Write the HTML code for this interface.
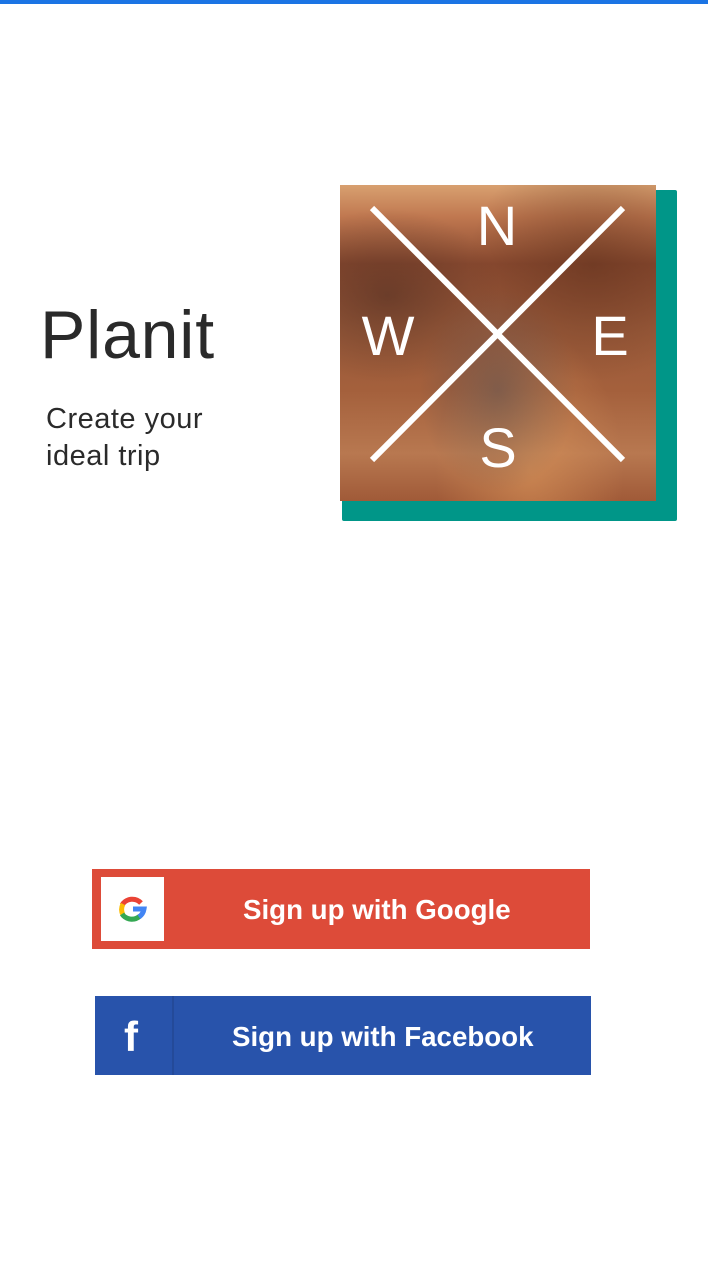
<!DOCTYPE html>
<html><head><style>
*{margin:0;padding:0;box-sizing:border-box}
body{width:708px;height:1266px;background:#fff;position:relative;overflow:hidden;font-family:"Liberation Sans",sans-serif}
.top{position:absolute;left:0;top:0;width:708px;height:4px;background:#1b74e4}
.title{position:absolute;left:40px;top:296px;font-size:68px;color:#2a2a2a;letter-spacing:0.8px}
.sub{position:absolute;left:46px;top:401px;font-size:29px;line-height:37px;color:#2a2a2a;letter-spacing:0.5px}
.shadow{position:absolute;left:342px;top:190px;width:335px;height:331px;background:#009688;border-radius:2px}
.img{position:absolute;left:340px;top:185px;width:316px;height:316px;
background:
radial-gradient(ellipse at 50% 65%,rgba(90,80,80,.55),transparent 35%),
radial-gradient(ellipse at 15% 35%,rgba(70,40,30,.5),transparent 30%),
radial-gradient(ellipse at 80% 25%,rgba(90,45,25,.5),transparent 35%),
radial-gradient(ellipse at 60% 90%,rgba(220,150,90,.6),transparent 35%),
linear-gradient(180deg,#d8a070 0%,#c07850 10%,#8a4a30 25%,#9a5a3a 45%,#a4603c 65%,#b87850 85%,#a05a38 100%)}
.btn{position:absolute;color:#fff;font-weight:bold;font-size:27.7px}
.g{left:92px;top:869px;width:498px;height:80px;background:#dd4b39}
.g .ic{position:absolute;left:9px;top:8px;width:63px;height:64px;background:#fff}
.g span{position:absolute;left:151px;top:25px}
.f{left:95px;top:996px;width:496px;height:79px;background:#2853ab}
.f .div{position:absolute;left:77px;top:0;width:2px;height:79px;background:#244a99}
.f span{position:absolute;left:137px;top:25px}
.f .fi{position:absolute;left:29px;top:17px;font-size:42px}
</style></head><body>
<div class="top"></div>
<div class="title">Planit</div>
<div class="sub">Create your<br>ideal trip</div>
<div class="shadow"></div>
<div class="img"></div>
<svg style="position:absolute;left:340px;top:185px" width="316" height="316">
<line x1="32" y1="23" x2="283" y2="275" stroke="#fff" stroke-width="6"/>
<line x1="283" y1="23" x2="32" y2="275" stroke="#fff" stroke-width="6"/>
<g fill="#fff" font-family="Liberation Sans,sans-serif" font-size="56" text-anchor="middle">
<text x="157" y="60">N</text><text x="48" y="170">W</text><text x="270" y="170">E</text><text x="158" y="282">S</text></g>
</svg>
<div class="btn g"><div class="ic"><svg width="63" height="64" viewBox="0 0 63 64">
<path d="M40 26 A12 12 0 0 0 21 28" fill="none" stroke="#ea4335" stroke-width="5"/>
<path d="M22 27 A12 12 0 0 0 22 38" fill="none" stroke="#fbbc05" stroke-width="5"/>
<path d="M21 37 A12 12 0 0 0 39 39" fill="none" stroke="#34a853" stroke-width="5"/>
<path d="M38 40 A12 12 0 0 0 43 32 L32 32" fill="none" stroke="#4285f4" stroke-width="5"/>
</svg></div><span>Sign up with Google</span></div>
<div class="btn f"><div class="fi">f</div><div class="div"></div><span>Sign up with Facebook</span></div>
</body></html>
